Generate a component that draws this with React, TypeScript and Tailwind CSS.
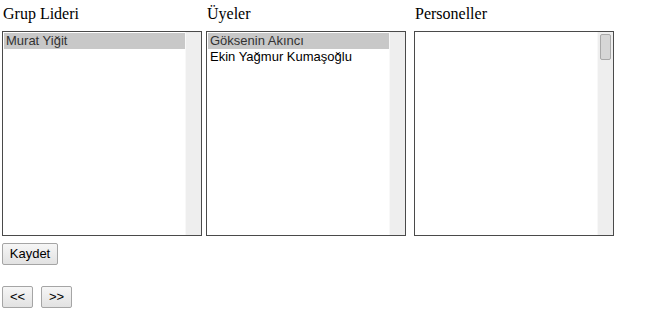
import React from 'react';

interface ListColumn {
  title: string;
  items: string[];
  selected?: number;
  thumb?: boolean;
  gapLeft: string;
}

const COLUMNS: ListColumn[] = [
  { title: 'Grup Lideri', items: ['Murat Yiğit'], selected: 0, gapLeft: 'ml-0' },
  { title: 'Üyeler', items: ['Göksenin Akıncı', 'Ekin Yağmur Kumaşoğlu'], selected: 0, gapLeft: 'ml-[4px]' },
  { title: 'Personeller', items: [], thumb: true, gapLeft: 'ml-[8px]' },
];

function ListBox({ col }: { col: ListColumn }) {
  return (
    <div className="flex h-[205px] w-[200px] border border-[#4a4a4a] bg-white">
      <div className="flex-1 pt-px pl-px">
        {col.items.map((item, i) => (
          <div
            key={i}
            className={`h-[16px] pl-[2px] text-[13px] leading-[16px] ${
              col.selected === i ? 'bg-[#c8c8c8] text-[#333]' : 'text-black'
            }`}
          >
            {item}
          </div>
        ))}
      </div>
      <div className="relative w-[16px] border-l border-[#f8f8f8] bg-[#eeeeee]">
        {col.thumb && (
          <div className="absolute left-[2px] top-[2px] h-[26px] w-[11px] rounded-[2px] border border-[#a8a8a8] bg-[#d6d6d6]" />
        )}
      </div>
    </div>
  );
}

function Btn({ label, className = '' }: { label: string; className?: string }) {
  return (
    <button
      className={`h-[22px] rounded-[2px] border border-[#a5a5a5] bg-gradient-to-b from-[#f6f6f6] to-[#e2e2e2] text-[13px] leading-[20px] text-black ${className}`}
    >
      {label}
    </button>
  );
}

export default function App() {
  return (
    <div
      className="min-h-[325px] w-[645px] bg-white pl-[2px] pt-[5px]"
      style={{ fontFamily: '"Liberation Sans", Arial, sans-serif' }}
    >
      <div className="flex">
        {COLUMNS.map((col, i) => (
          <div key={i} className={col.gapLeft}>
            <div
              className="h-[26px] pl-px text-[16px] leading-[18px] text-black"
              style={{ fontFamily: '"Liberation Serif", "Times New Roman", serif' }}
            >
              {col.title}
            </div>
            <ListBox col={col} />
          </div>
        ))}
      </div>
      <div className="mt-[7px] flex">
        <Btn label="Kaydet" className="w-[56px]" />
      </div>
      <div className="mt-[21px] flex gap-[8px]">
        <Btn label="<<" className="w-[31px]" />
        <Btn label=">>" className="w-[31px]" />
      </div>
    </div>
  );
}
